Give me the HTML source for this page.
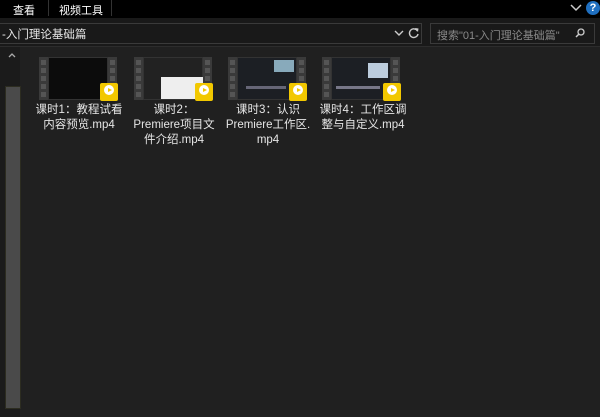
<!DOCTYPE html>
<html><head><meta charset="utf-8"><style>
body{margin:0;width:600px;height:417px;background:#202020;overflow:hidden;position:relative;font-family:"Liberation Sans","Noto Sans CJK SC",sans-serif;color:#ddd;font-size:12px}
.abs{position:absolute}
.top{left:0;top:0;width:600px;height:18px;background:#000}
.row2{left:0;top:18px;width:600px;height:28px;background:#191919;border-bottom:1px solid #2c2c2c}
.addr{left:-1px;top:23px;width:421px;height:19px;border:1px solid #3a3a3a;background:#191919}
.search{left:430px;top:23px;width:163px;height:19px;border:1px solid #3a3a3a;background:#191919}
.left{left:0;top:47px;width:20px;height:370px;background:#1b1b1b}
.sb{left:5px;top:86px;width:14px;height:321px;background:#4a4a4a;border:1px solid #2c2c20}
.thumb{width:78px;height:43px;background:#333;top:57px}
.film{position:absolute;top:0;width:9px;height:43px;background:#3a3a3a}
.film i{display:block;width:5px;height:5px;background:#555;margin:3px 2px 3px}
.scr{position:absolute;left:10px;right:10px;top:1px;bottom:1px;background:#111}
.badge{position:absolute;right:-1px;bottom:-1px;width:18px;height:18px;background:#f2c800;border-radius:2px}
.badge b{position:absolute;left:4px;top:2px;width:10px;height:10px;border-radius:50%;background:#fff}
.badge b:after{content:"";position:absolute;left:4px;top:2.5px;border-left:4px solid #f2c800;border-top:2.5px solid transparent;border-bottom:2.5px solid transparent}
.cap{width:96px;text-align:center;top:103px;line-height:15px;font-size:11.5px;color:#e6e6e6}
</style></head><body>
<div class="abs top"></div>
<div class="abs" style="left:13px;top:2px;font-size:11px;color:#fff">查看</div>
<div class="abs" style="left:48px;top:0;width:1px;height:16px;background:#333"></div>
<div class="abs" style="left:59px;top:2px;font-size:11px;color:#fff">视频工具</div>
<div class="abs" style="left:111px;top:0;width:1px;height:16px;background:#333"></div>
<svg class="abs" style="left:570px;top:3px" width="12" height="10"><path d="M1 2 L6 7 L11 2" stroke="#ccc" stroke-width="1.5" fill="none"/></svg>
<div class="abs" style="left:586px;top:1px;width:14px;height:14px;border-radius:50%;background:#1f6fc0;color:#fff;font-size:11px;text-align:center;line-height:14px;font-weight:bold">?</div>
<div class="abs row2"></div>
<div class="abs addr"></div>
<div class="abs" style="left:2px;top:26px;font-size:11.5px;color:#e6e6e6">-入门理论基础篇</div>
<svg class="abs" style="left:394px;top:29px" width="10" height="8"><path d="M1 2 L5 6 L9 2" stroke="#ccc" stroke-width="1.4" fill="none"/></svg>
<svg class="abs" style="left:408px;top:27px" width="12" height="12"><path d="M9.5 4 A4.3 4.3 0 1 0 10 7" stroke="#ccc" stroke-width="1.4" fill="none"/><path d="M7 1 L10.5 1.5 L10 5 Z" fill="#ccc"/></svg>
<div class="abs search"></div>
<div class="abs" style="left:437px;top:27px;font-size:11px;color:#8a8a8a">搜索"01-入门理论基础篇"</div>
<svg class="abs" style="left:575px;top:28px" width="10" height="10"><circle cx="6" cy="4" r="3" stroke="#ccc" stroke-width="1.3" fill="none"/><path d="M4 6 L1 9" stroke="#ccc" stroke-width="1.5"/></svg>
<div class="abs left"></div>
<svg class="abs" style="left:8px;top:52px" width="8" height="6"><path d="M1 5 L4 2 L7 5" stroke="#aaa" stroke-width="1.3" fill="none"/></svg>
<div class="abs sb"></div>

<div class="abs thumb" style="left:39px"><div class="scr" style="background:#0c0c0c"></div><div class="film" style="left:0"><i></i><i></i><i></i><i></i><i></i></div><div class="film" style="right:0"><i></i><i></i><i></i><i></i><i></i></div><div class="badge"><b></b></div></div>
<div class="abs thumb" style="left:134px"><div class="scr" style="background:#222"><div style="position:absolute;left:17px;top:19px;width:42px;height:22px;background:#eee"></div></div><div class="film" style="left:0"><i></i><i></i><i></i><i></i><i></i></div><div class="film" style="right:0"><i></i><i></i><i></i><i></i><i></i></div><div class="badge"><b></b></div></div>
<div class="abs thumb" style="left:228px"><div class="scr" style="background:#1c1f24"><div style="position:absolute;left:36px;top:2px;width:20px;height:12px;background:#8ab"></div><div style="position:absolute;left:8px;top:28px;width:40px;height:3px;background:#667"></div></div><div class="film" style="left:0"><i></i><i></i><i></i><i></i><i></i></div><div class="film" style="right:0"><i></i><i></i><i></i><i></i><i></i></div><div class="badge"><b></b></div></div>
<div class="abs thumb" style="left:322px"><div class="scr" style="background:#1c1f24"><div style="position:absolute;left:36px;top:5px;width:20px;height:15px;background:#bcd"></div><div style="position:absolute;left:4px;top:28px;width:44px;height:3px;background:#778"></div></div><div class="film" style="left:0"><i></i><i></i><i></i><i></i><i></i></div><div class="film" style="right:0"><i></i><i></i><i></i><i></i><i></i></div><div class="badge"><b></b></div></div>

<div class="abs cap" style="left:31px">课时1：教程试看<br>内容预览.mp4</div>
<div class="abs cap" style="left:126px">课时2：<br>Premiere项目文<br>件介绍.mp4</div>
<div class="abs cap" style="left:220px">课时3：认识<br>Premiere工作区.<br>mp4</div>
<div class="abs cap" style="left:315px">课时4：工作区调<br>整与自定义.mp4</div>
</body></html>
